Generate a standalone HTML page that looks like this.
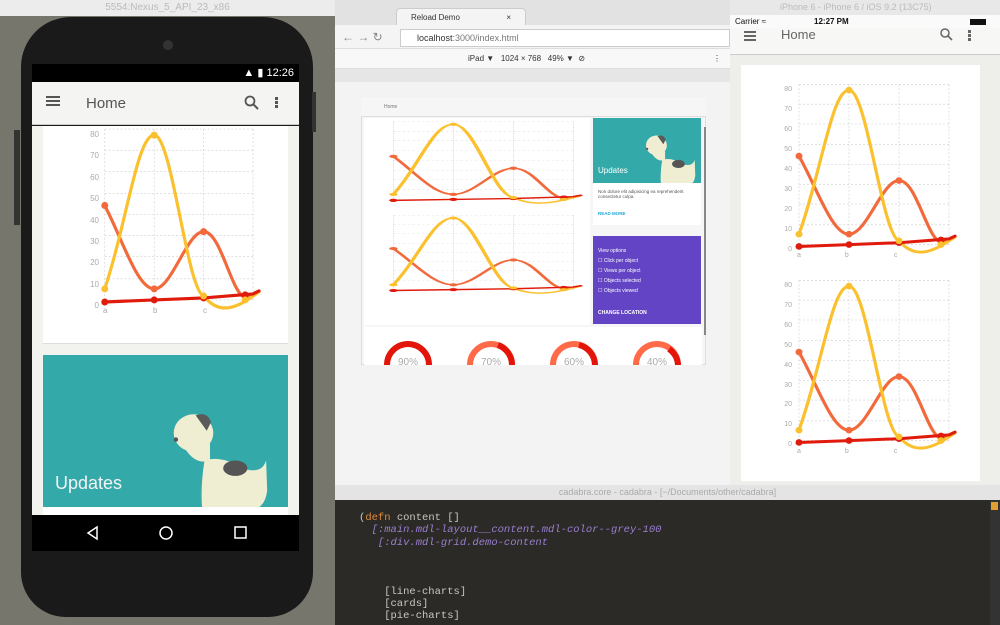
<!DOCTYPE html>
<html><head><meta charset="utf-8"><style>
*{margin:0;padding:0;box-sizing:border-box}
body{width:1000px;height:625px;overflow:hidden;position:relative;background:#76766c;font-family:"Liberation Sans",sans-serif}
.a{position:absolute}
.mono{font-family:"Liberation Mono",monospace}
</style></head><body>
<svg width="0" height="0" style="position:absolute">
<defs>
<symbol id="ch" viewBox="0 0 180 190" preserveAspectRatio="none">
<g stroke="#ccc" stroke-width="0.6" stroke-dasharray="2,2" fill="none">
<path d="M22 10H172M22 31H172M22 52H172M22 74H172M22 95H172M22 116H172M22 137H172M22 159H172M22 180H172"/>
<path d="M22 10V180M72 10V180M122 10V180M172 10V180"/>
</g>
<g fill="none" stroke-width="3.2" stroke-linecap="round">
<path d="M22 86C40 120 55 169 72 169C90 169 105 112 122 112C140 112 150 176 165 178L176 172" stroke="#f26a3c"/>
<path d="M22 169C45 100 55 16 72 16C90 16 105 170 122 176C135 192 150 192 172 176L178 172" stroke="#fbc02d"/>
<path d="M22 182L72 180L122 178L172 174L178 171" stroke="#e01b0c"/>
</g>
<g fill="#e01b0c"><circle cx="22" cy="182" r="3.5"/><circle cx="72" cy="180" r="3.5"/><circle cx="122" cy="178" r="3.5"/><circle cx="164" cy="175" r="3.5"/></g>
<g fill="#f26a3c"><circle cx="22" cy="86" r="3.5"/><circle cx="72" cy="169" r="3.5"/><circle cx="122" cy="112" r="3.5"/></g>
<g fill="#fbc02d"><circle cx="22" cy="169" r="3.5"/><circle cx="72" cy="16" r="3.5"/><circle cx="122" cy="176" r="3.5"/><circle cx="164" cy="180" r="3.5"/></g>
</symbol>
<symbol id="dog" viewBox="0 0 100 100">
<path d="M40 55Q55 50 75 62Q92 68 96 55L97 82Q95 100 80 100L38 100Q36 80 40 55Z" fill="#efedd2"/>
<ellipse cx="30" cy="30" rx="18" ry="17" fill="#efedd2"/>
<path d="M20 40Q30 60 45 55L45 40Z" fill="#efedd2"/>
<path d="M32 14Q42 10 46 20L42 28Z" fill="#5a5a5a"/>
<ellipse cx="68" cy="62" rx="11" ry="7" fill="#555"/>
<circle cx="14" cy="36" r="2" fill="#555"/>
</symbol>
</defs>
</svg>

<!-- Android emulator -->
<div class="a" style="left:0;top:0;width:335px;height:16px;background:#ececec;color:#bbb;font-size:10px;text-align:center;line-height:16px">5554:Nexus_5_API_23_x86</div>
<div class="a" style="left:21px;top:17px;width:292px;height:600px;background:#1a1a1a;border-radius:50px 50px 45px 45px"></div>
<div class="a" style="left:14px;top:130px;width:6px;height:95px;background:#333"></div>
<div class="a" style="left:312px;top:92px;width:4px;height:40px;background:#333"></div>
<div class="a" style="left:163px;top:40px;width:10px;height:10px;border-radius:50%;background:#333"></div>
<div class="a" style="left:32px;top:64px;width:267px;height:18px;background:#000;color:#fff;font-size:11px;text-align:right;padding-right:5px;line-height:18px">▲ ▮ 12:26</div>
<div class="a" style="left:32px;top:82px;width:267px;height:43px;background:#f4f4f2;border-bottom:1px solid #ccc"></div>
<div class="a" style="left:46px;top:96px;width:14px;height:2px;background:#555;box-shadow:0 4px #555,0 8px #555"></div>
<div class="a" style="left:86px;top:95px;font-size:15px;color:#555">Home</div>
<svg class="a" style="left:244px;top:95px" width="16" height="16"><circle cx="6" cy="6" r="4.5" fill="none" stroke="#555" stroke-width="1.8"/><path d="M9.5 9.5L14 14" stroke="#555" stroke-width="2"/></svg>
<div class="a" style="left:275px;top:97px;width:3px;height:3px;background:#555;box-shadow:0 4px #555,0 8px #555"></div>
<div class="a" style="left:32px;top:126px;width:267px;height:390px;background:#f2f2ee"></div>
<div class="a" style="left:43px;top:126px;width:245px;height:218px;background:#fff;border-bottom:1px solid #ddd"></div>
<svg class="a" style="left:83px;top:119px" width="178" height="191"><use href="#ch" width="178" height="191"/></svg>
<div class="a" style="left:87px;top:124px;font-size:8px;color:#aaa;line-height:21.4px;text-align:right;width:12px">80<br>70<br>60<br>50<br>40<br>30<br>20<br>10<br>0</div>
<div class="a" style="left:103px;top:306px;font-size:8px;color:#aaa">a</div>
<div class="a" style="left:153px;top:306px;font-size:8px;color:#aaa">b</div>
<div class="a" style="left:203px;top:306px;font-size:8px;color:#aaa">c</div>
<div class="a" style="left:43px;top:355px;width:245px;height:152px;background:#34a9a9;overflow:hidden">
<svg class="a" style="left:115px;top:45px" width="115" height="110"><use href="#dog" width="115" height="110"/></svg>
<div class="a" style="left:12px;top:118px;color:#f4f4f4;font-size:18px">Updates</div></div>
<div class="a" style="left:43px;top:507px;width:245px;height:8px;background:#fff"></div>
<div class="a" style="left:32px;top:515px;width:267px;height:36px;background:#000"></div>
<svg class="a" style="left:32px;top:515px" width="267" height="36"><g fill="none" stroke="#fff" stroke-width="1.5"><path d="M65 12L56 18L65 24Z"/><circle cx="134" cy="18" r="6"/><rect x="203" y="12" width="11" height="11"/></g></svg>

<!-- Browser -->
<div class="a" style="left:335px;top:0;width:395px;height:485px;background:#f3f3f3"></div>
<div class="a" style="left:335px;top:0;width:395px;height:25px;background:#e2e2e2"></div>
<div class="a" style="left:396px;top:8px;width:130px;height:18px;background:#f4f4f4;border:1px solid #ccc;border-bottom:none;border-radius:4px 4px 0 0;font-size:8px;padding:4px 14px;color:#333">Reload Demo<span style="float:right">×</span></div>
<div class="a" style="left:335px;top:25px;width:395px;height:24px;background:#f4f4f4;border-bottom:1px solid #ddd"></div>
<div class="a" style="left:342px;top:30px;font-size:12px;color:#888">←&nbsp;→&nbsp;↻</div>
<div class="a" style="left:400px;top:29px;width:330px;height:18px;background:#fff;border:1px solid #ccc;font-size:9px;line-height:16px;padding-left:16px;color:#333">localhost<span style="color:#777">:3000/index.html</span></div>
<div class="a" style="left:335px;top:49px;width:395px;height:20px;background:#f8f8f8;border-bottom:1px solid #ddd;font-size:8px;line-height:20px;color:#333"><span style="position:absolute;left:133px">iPad ▼ &nbsp; 1024 × 768 &nbsp; 49% ▼ &nbsp;⊘</span><span style="position:absolute;left:378px">⋮</span></div>
<div class="a" style="left:335px;top:69px;width:395px;height:13px;background:#e6e6e6"></div>
<div class="a" style="left:361px;top:97px;width:345px;height:268px;background:#f6f6f6;border:1px solid #ddd"></div>
<div class="a" style="left:361px;top:97px;width:345px;height:20px;background:#f6f6f6;border-bottom:1px solid #ddd;font-size:5px;color:#777;line-height:20px;padding-left:23px">Home</div>
<div class="a" style="left:364px;top:118px;width:226px;height:207px;background:#fff"></div>
<svg class="a" style="left:367px;top:117px" width="216" height="87"><use href="#ch" width="216" height="87"/></svg>
<svg class="a" style="left:367px;top:211px" width="216" height="83"><use href="#ch" width="216" height="83"/></svg>
<div class="a" style="left:593px;top:118px;width:108px;height:65px;background:#34a9a9;overflow:hidden"><svg class="a" style="left:45px;top:10px" width="60" height="58"><use href="#dog" width="60" height="58"/></svg><div class="a" style="left:5px;top:48px;color:#fff;font-size:8px">Updates</div></div>
<div class="a" style="left:593px;top:183px;width:108px;height:42px;background:#fff;font-size:4.5px;color:#555;padding:6px 5px">Non dolore elit adipisicing ea reprehenderit consectetur culpa.<div style="color:#1aa8d8;margin-top:12px;font-weight:bold">READ MORE</div></div>
<div class="a" style="left:593px;top:236px;width:108px;height:88px;background:#6244c4;color:#fff;font-size:5px;padding:10px 5px;line-height:10px">View options<br>☐ Click per object<br>☐ Views per object<br>☐ Objects selected<br>☐ Objects viewed<div style="margin-top:12px;font-weight:bold">CHANGE LOCATION</div></div>
<div class="a" style="left:704px;top:127px;width:2px;height:208px;background:#888"></div>
<div class="a" style="left:364px;top:327px;width:338px;height:38px;background:#fff"></div>
<svg class="a" style="left:364px;top:327px" width="338" height="38"><g fill="none" stroke-width="6"><path d="M23 38A21 21 0 0 1 65 38" stroke="#e3140a"/><path d="M106 38A21 21 0 0 1 148 38" stroke="#ff6b48"/><path d="M189 38A21 21 0 0 1 231 38" stroke="#ff6b48"/><path d="M272 38A21 21 0 0 1 314 38" stroke="#ff6b48"/></g>
<g fill="none" stroke-width="6" stroke="#e3140a"><path d="M148 38A21 21 0 0 0 134 18"/><path d="M231 38A21 21 0 0 0 215 18"/><path d="M314 38A21 21 0 0 0 305 22"/></g>
<g font-size="10" fill="#aaa" text-anchor="middle" font-family="Liberation Sans"><text x="44" y="38">90%</text><text x="127" y="38">70%</text><text x="210" y="38">60%</text><text x="293" y="38">40%</text></g></svg>

<!-- iPhone -->
<div class="a" style="left:730px;top:0;width:270px;height:490px;background:#eeeeea"></div>
<div class="a" style="left:730px;top:0;width:270px;height:15px;background:#e8e8e8;font-size:9px;color:#bbb;line-height:15px;padding-left:50px">iPhone 6 - iPhone 6 / iOS 9.2 (13C75)</div>
<div class="a" style="left:730px;top:15px;width:270px;height:13px;background:#fafafa;font-size:8px;line-height:13px;color:#111;padding-left:5px">Carrier ≈<span style="position:absolute;left:84px;font-weight:bold">12:27 PM</span><span style="position:absolute;left:240px;width:16px;height:6px;top:4px;background:#111"></span></div>
<div class="a" style="left:730px;top:28px;width:270px;height:27px;background:#f7f7f5;border-bottom:1px solid #ccc"></div>
<div class="a" style="left:744px;top:31px;width:12px;height:1.5px;background:#666;box-shadow:0 4px #666,0 8px #666"></div>
<div class="a" style="left:781px;top:27px;font-size:13px;color:#666">Home</div>
<svg class="a" style="left:940px;top:28px" width="14" height="14"><circle cx="5" cy="5" r="4" fill="none" stroke="#666" stroke-width="1.5"/><path d="M8 8L12 12" stroke="#666" stroke-width="1.6"/></svg>
<div class="a" style="left:968px;top:30px;width:2.5px;height:2.5px;background:#666;box-shadow:0 4px #666,0 8px #666"></div>
<div class="a" style="left:741px;top:65px;width:239px;height:416px;background:#fff"></div>
<svg class="a" style="left:777px;top:75px" width="180" height="179"><use href="#ch" width="180" height="179"/></svg>
<svg class="a" style="left:777px;top:271px" width="180" height="179"><use href="#ch" width="180" height="179"/></svg>
<div class="a" style="left:780px;top:80px;font-size:7px;color:#aaa;line-height:20px;text-align:right;width:12px">80<br>70<br>60<br>50<br>40<br>30<br>20<br>10<br>0</div>
<div class="a" style="left:780px;top:276px;font-size:7px;color:#aaa;line-height:19.9px;text-align:right;width:12px">80<br>70<br>60<br>50<br>40<br>30<br>20<br>10<br>0</div>
<div class="a" style="left:797px;top:448px;font-size:7px;color:#aaa">a<span style="margin-left:44px">b</span><span style="margin-left:45px">c</span></div>
<div class="a" style="left:797px;top:252px;font-size:7px;color:#aaa">a<span style="margin-left:44px">b</span><span style="margin-left:45px">c</span></div>

<!-- Editor -->
<div class="a" style="left:335px;top:485px;width:665px;height:15px;background:#e4e4e4;font-size:9px;color:#aaa;text-align:center;line-height:15px">cadabra.core - cadabra - [~/Documents/other/cadabra]</div>
<div class="a mono" style="left:335px;top:500px;width:665px;height:125px;background:#2b2a26;color:#c8c8c0;font-size:10.5px;line-height:12.3px;padding:12px 0 0 24px;white-space:pre">(<span style="color:#e08a3c">defn</span> content []
  <span style="color:#9b7ed0;font-style:italic">[:main.mdl-layout__content.mdl-color--grey-100</span>
   <span style="color:#9b7ed0;font-style:italic">[:div.mdl-grid.demo-content</span>



    [line-charts]
    [cards]
    [pie-charts]</div>
<div class="a" style="left:990px;top:500px;width:10px;height:125px;background:#333"></div>
<div class="a" style="left:991px;top:502px;width:7px;height:8px;background:#e0a030"></div>
</body></html>
